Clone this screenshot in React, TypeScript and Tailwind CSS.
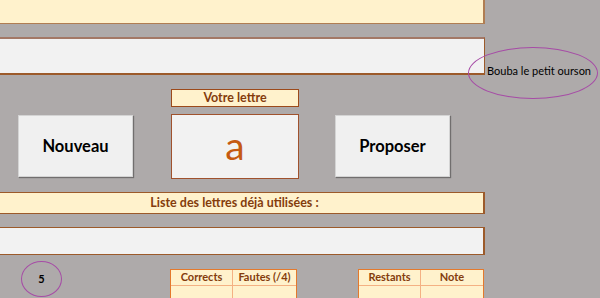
import React from "react";

const font = { fontFamily: "Lato, 'Open Sans', sans-serif" };

const Bar: React.FC<{ children?: React.ReactNode; className?: string }> = ({ children, className = "" }) => (
  <div className={`w-[485px] bg-[#fff2cc] border-r-2 border-y border-[#9c5a2a] ${className}`}>{children}</div>
);

const Button: React.FC<{ label: string }> = ({ label }) => (
  <div className="w-[115px] h-[62px] bg-[#f0f0f0] border border-[#d4d4d4] shadow-[1px_1px_1px_rgba(0,0,0,0.35)] flex items-center justify-center">
    <span className="text-[16.5px] font-bold text-black">{label}</span>
  </div>
);

const ScoreTable: React.FC<{ cols: [string, string]; widths: [string, string] }> = ({ cols, widths }) => (
  <div className="border border-[#e4792c] bg-[#fff2cc] flex flex-col">
    <div className="flex h-[16px] border-b border-[#f4b183]">
      <div className={`${widths[0]} border-r border-[#f4b183] flex items-center justify-center text-[11px] font-bold text-[#843c0c]`}>{cols[0]}</div>
      <div className={`${widths[1]} flex items-center justify-center text-[11px] font-bold text-[#843c0c]`}>{cols[1]}</div>
    </div>
    <div className="flex h-[16px]">
      <div className={`${widths[0]} border-r border-[#f4b183]`} />
      <div className={widths[1]} />
    </div>
  </div>
);

export default function App() {
  return (
    <div className="relative w-[600px] h-[298px] bg-[#aeaaaa] overflow-hidden" style={font}>
      <div className="flex flex-col">
        {/* top bar */}
        <Bar className="h-[25px] -mt-px border-[#b07d52]" />

        {/* word display */}
        <div className="mt-[13px] w-[485px] h-[38px] bg-[#f2f2f2] border-t-2 border-t-[#a37866] border-b-2 border-b-[#9c5a2a] border-r border-r-[#9c5a2a]" />

        {/* controls */}
        <div className="mt-[14px] flex items-start h-[90px]">
          <div className="ml-[18px] mt-[26px]">
            <Button label="Nouveau" />
          </div>
          <div className="ml-[38px] w-[128px] flex flex-col">
            <div className="h-[18px] bg-[#fff2cc] border border-[#9c4a1a] flex items-center justify-center text-[12.5px] font-bold text-[#843c0c]">
              Votre lettre
            </div>
            <div className="mt-[7px] h-[65px] bg-[#f2f2f2] border border-[#a0522d] flex items-center justify-center">
              <span className="text-[39px] leading-none text-[#c55a11] -mt-[2px]">a</span>
            </div>
          </div>
          <div className="ml-[36px] mt-[26px]">
            <Button label="Proposer" />
          </div>
        </div>

        {/* used letters */}
        <Bar className="mt-[13px] h-[22px] flex items-center justify-center pr-[14px]">
          <span className="text-[12.5px] font-bold text-[#843c0c]">Liste des lettres déjà utilisées :</span>
        </Bar>
        <div className="mt-[13px] w-[485px] h-[28px] bg-[#f2f2f2] border-y border-[#9c5a2a] border-r-2" />

        {/* score row */}
        <div className="mt-[6px] flex items-start">
          <div className="ml-[21px] w-[41px] h-[36px] rounded-[50%] border-[1.5px] border-[#a64ca6] flex items-center justify-center text-[11px] font-bold text-black">
            5
          </div>
          <div className="ml-[108px] mt-[8px]">
            <ScoreTable cols={["Corrects", "Fautes (/4)"]} widths={["w-[62px]", "w-[63px]"]} />
          </div>
          <div className="ml-[61px] mt-[8px]">
            <ScoreTable cols={["Restants", "Note"]} widths={["w-[62px]", "w-[62px]"]} />
          </div>
        </div>
      </div>

      {/* annotation */}
      <div className="absolute left-[468px] top-[47px] w-[130px] h-[52px] rounded-[50%] border-[1.5px] border-[#a64ca6]" />
      <div className="absolute left-[487px] top-[63px] text-[11px] text-black whitespace-nowrap">Bouba le petit ourson</div>
    </div>
  );
}
